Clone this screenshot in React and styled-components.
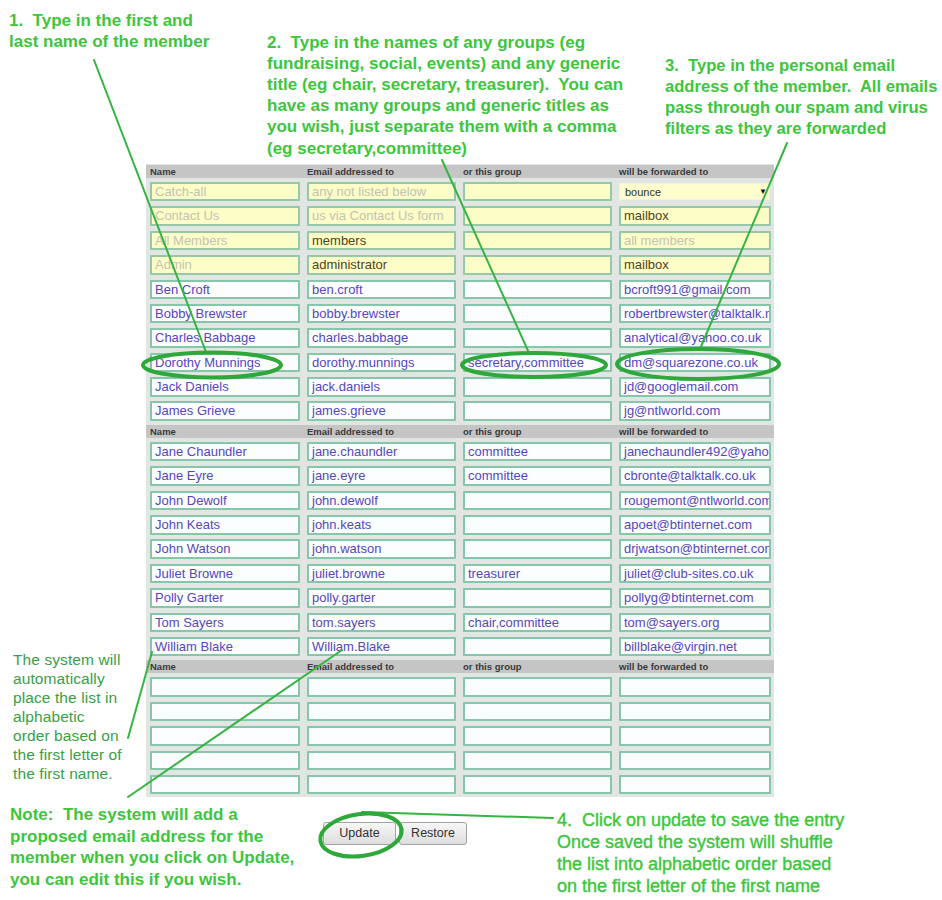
import React from "react";
import styled, { createGlobalStyle } from "styled-components";

const Global = createGlobalStyle`
  html, body { margin: 0; padding: 0; background: #ffffff; }
  body { font-family: "Liberation Sans", Arial, sans-serif; }
`;

const Page = styled.div`
  position: relative;
  width: 942px;
  height: 900px;
  overflow: hidden;
  background: #ffffff;
`;

const TopNotes = styled.div`
  display: grid;
  grid-template-columns: 267px 398px 1fr;
  height: 163.5px;
`;

const Callout = styled.div`
  margin-top: ${(p) => p.$top}px;
  padding-left: ${(p) => p.$left || 0}px;
  font-family: "Liberation Sans", Arial, sans-serif;
  font-weight: ${(p) => (p.$thin ? 400 : 700)};
  font-size: ${(p) => p.$size || 17}px;
  line-height: ${(p) => p.$lh || 21.3}px;
  color: ${(p) => p.$color || "#3dc63d"};
  white-space: nowrap;
  ${(p) => (p.$stroke ? "-webkit-text-stroke: 0.4px currentColor;" : "")}
`;

const BottomNote = styled(Callout)`
  width: 323px;
  flex: 0 0 323px;
  box-sizing: border-box;
`;

const Middle = styled.div`
  display: flex;
`;

const Side = styled.div`
  width: 146px;
  flex: 0 0 146px;
  display: flex;
  flex-direction: column;
  justify-content: flex-end;
  padding-bottom: 14px;
  box-sizing: border-box;
`;

const SideNote = styled.div`
  padding-left: 13px;
  font-family: "Liberation Sans", Arial, sans-serif;
  font-size: 15.5px;
  line-height: 19px;
  color: #39a047;
  white-space: nowrap;
  letter-spacing: 0.1px;
`;

const Table = styled.div`
  width: 628px;
  background: #e1e6e2;
  display: flex;
  flex-direction: column;
`;

const COLS = "157px 156px 156px 159px";

const HeaderRow = styled.div`
  display: grid;
  grid-template-columns: ${COLS};
  height: 13px;
  margin: 1.5px 0;
  background: #c5c5c5;
  align-items: center;
`;

const HeaderCell = styled.div`
  padding-left: 4px;
  font-family: "Liberation Sans", Arial, sans-serif;
  font-weight: 700;
  font-size: 9.5px;
  color: #3a3a3a;
  white-space: nowrap;
`;

const Row = styled.div`
  display: grid;
  grid-template-columns: ${COLS};
  height: 24.4px;
  align-items: center;
`;

const Cell = styled.div`
  display: flex;
  padding: 0 3px 0 4px;
  height: 100%;
  align-items: center;
  box-sizing: border-box;
  min-width: 0;
`;

const tones = {
  member: "#5548bb",
  dim: "#c3c3b3",
  olive: "#4d4420",
};

const Field = styled.div`
  flex: 1;
  min-width: 0;
  height: 19.5px;
  box-sizing: border-box;
  border: 2px solid ${(p) => (p.$yellow ? "#93c9a6" : "#86c6aa")};
  border-radius: 1px;
  background: ${(p) => (p.$yellow ? "#fdfdc7" : "#fcfdff")};
  padding: 0 3px;
  font-family: "Liberation Sans", Arial, sans-serif;
  font-size: 13px;
  line-height: 15.5px;
  color: ${(p) => tones[p.$tone || "member"]};
  white-space: nowrap;
  overflow: hidden;
`;

const SelectBox = styled.div`
  flex: 1;
  height: 17px;
  margin-right: 1px;
  box-sizing: border-box;
  background: #fdfdcd;
  border: 1px solid #f2f2e0;
  display: flex;
  align-items: center;
  justify-content: space-between;
  padding: 0 2px 0 5px;
  font-family: "Liberation Sans", Arial, sans-serif;
  font-size: 11px;
  color: #333322;
`;

const Arrow = styled.span`
  font-size: 8px;
  color: #111;
`;

const Bottom = styled.div`
  display: flex;
`;

const ButtonGroup = styled.div`
  width: 234px;
  flex: 0 0 234px;
  margin-top: 25px;
  display: flex;
  align-items: flex-start;
  gap: 3px;
`;

const Button = styled.button`
  width: ${(p) => p.$w}px;
  height: 23px;
  padding: 0;
  border: 1px solid #a3a3a3;
  border-radius: 3px;
  background: linear-gradient(#f7f7f7, #dddddd);
  font-family: "Liberation Sans", Arial, sans-serif;
  font-size: 12.5px;
  color: #333;
`;

const Overlay = styled.svg`
  position: absolute;
  left: 0;
  top: 0;
  width: 942px;
  height: 900px;
  pointer-events: none;
`;

const yellowRows = [
  [
    { t: "Catch-all", tone: "dim" },
    { t: "any not listed below", tone: "dim" },
    { t: "" },
    { select: "bounce" },
  ],
  [
    { t: "Contact Us", tone: "dim" },
    { t: "us via Contact Us form", tone: "dim" },
    { t: "" },
    { t: "mailbox", tone: "olive" },
  ],
  [
    { t: "All Members", tone: "dim" },
    { t: "members", tone: "olive" },
    { t: "" },
    { t: "all members", tone: "dim" },
  ],
  [
    { t: "Admin", tone: "dim" },
    { t: "administrator", tone: "olive" },
    { t: "" },
    { t: "mailbox", tone: "olive" },
  ],
];

const group1 = [
  ["Ben Croft", "ben.croft", "", "bcroft991@gmail.com"],
  ["Bobby Brewster", "bobby.brewster", "", "robertbrewster@talktalk.net"],
  ["Charles Babbage", "charles.babbage", "", "analytical@yahoo.co.uk"],
  ["Dorothy Munnings", "dorothy.munnings", "secretary,committee", "dm@squarezone.co.uk"],
  ["Jack Daniels", "jack.daniels", "", "jd@googlemail.com"],
  ["James Grieve", "james.grieve", "", "jg@ntlworld.com"],
];

const group2 = [
  ["Jane Chaundler", "jane.chaundler", "committee", "janechaundler492@yahoo.co.uk"],
  ["Jane Eyre", "jane.eyre", "committee", "cbronte@talktalk.co.uk"],
  ["John Dewolf", "john.dewolf", "", "rougemont@ntlworld.com"],
  ["John Keats", "john.keats", "", "apoet@btinternet.com"],
  ["John Watson", "john.watson", "", "drjwatson@btinternet.com"],
  ["Juliet Browne", "juliet.browne", "treasurer", "juliet@club-sites.co.uk"],
  ["Polly Garter", "polly.garter", "", "pollyg@btinternet.com"],
  ["Tom Sayers", "tom.sayers", "chair,committee", "tom@sayers.org"],
  ["William Blake", "William.Blake", "", "billblake@virgin.net"],
];

const emptyRows = [0, 1, 2, 3, 4].map(() => ["", "", "", ""]);

const Header = () => (
  <HeaderRow>
    <HeaderCell>Name</HeaderCell>
    <HeaderCell>Email addressed to</HeaderCell>
    <HeaderCell>or this group</HeaderCell>
    <HeaderCell>will be forwarded to</HeaderCell>
  </HeaderRow>
);

const MemberRows = ({ rows }) =>
  rows.map((r, i) => (
    <Row key={i}>
      {r.map((v, j) => (
        <Cell key={j}>
          <Field>{v}</Field>
        </Cell>
      ))}
    </Row>
  ));

const GREEN = "#36b443";

export default function App() {
  return (
    <Page>
      <Global />
      <TopNotes>
        <Callout $top={10} $left={9} $lh={21}>
          1.&nbsp; Type in the first and
          <br />
          last name of the member
        </Callout>
        <Callout $top={31.5} $lh={21.2}>
          2.&nbsp; Type in the names of any groups (eg
          <br />
          fundraising, social, events) and any generic
          <br />
          title (eg chair, secretary, treasurer).&nbsp; You can
          <br />
          have as many groups and generic titles as
          <br />
          you wish, just separate them with a comma
          <br />
          (eg secretary,committee)
        </Callout>
        <Callout $top={54.5} $lh={21} $size={16.6}>
          3.&nbsp; Type in the personal email
          <br />
          address of the member.&nbsp; All emails
          <br />
          pass through our spam and virus
          <br />
          filters as they are forwarded
        </Callout>
      </TopNotes>

      <Middle>
        <Side>
          <SideNote>
            The system will
            <br />
            automatically
            <br />
            place the list in
            <br />
            alphabetic
            <br />
            order based on
            <br />
            the first letter of
            <br />
            the first name.
          </SideNote>
        </Side>
        <Table>
          <Header />
          {yellowRows.map((r, i) => (
            <Row key={i}>
              {r.map((c, j) => (
                <Cell key={j}>
                  {c.select ? (
                    <SelectBox>
                      <span>{c.select}</span>
                      <Arrow>▼</Arrow>
                    </SelectBox>
                  ) : (
                    <Field $yellow $tone={c.tone}>
                      {c.t}
                    </Field>
                  )}
                </Cell>
              ))}
            </Row>
          ))}
          <MemberRows rows={group1} />
          <Header />
          <MemberRows rows={group2} />
          <Header />
          <MemberRows rows={emptyRows} />
        </Table>
      </Middle>

      <Bottom>
        <BottomNote $top={7} $left={10} $lh={21.7}>
          Note:&nbsp; The system will add a
          <br />
          proposed email address for the
          <br />
          member when you click on Update,
          <br />
          you can edit this if you wish.
        </BottomNote>
        <ButtonGroup>
          <Button $w={73}>Update</Button>
          <Button $w={68}>Restore</Button>
        </ButtonGroup>
        <Callout $top={12} $lh={22} $size={18} $thin $stroke>
          4.&nbsp; Click on update to save the entry
          <br />
          Once saved the system will shuffle
          <br />
          the list into alphabetic order based
          <br />
          on the first letter of the first name
        </Callout>
      </Bottom>

      <Overlay viewBox="0 0 942 900">
        <g stroke={GREEN} strokeWidth="2" fill="none" strokeLinecap="round">
          <line x1="94" y1="60" x2="206" y2="352" />
          <line x1="442" y1="160" x2="529" y2="353" />
          <line x1="787" y1="143" x2="700" y2="349" />
          <line x1="128" y1="738" x2="152" y2="652" />
          <line x1="128" y1="797" x2="342" y2="650" />
          <line x1="362" y1="812" x2="553" y2="818" />
        </g>
        <g stroke="#2ea83a" strokeWidth="4" fill="none">
          <ellipse cx="212" cy="365" rx="69" ry="12.5" />
          <ellipse cx="534" cy="365" rx="72" ry="12" />
          <ellipse cx="698" cy="364" rx="81" ry="15" />
          <ellipse cx="361" cy="835" rx="41" ry="21" transform="rotate(-8 361 835)" />
        </g>
      </Overlay>
    </Page>
  );
}
